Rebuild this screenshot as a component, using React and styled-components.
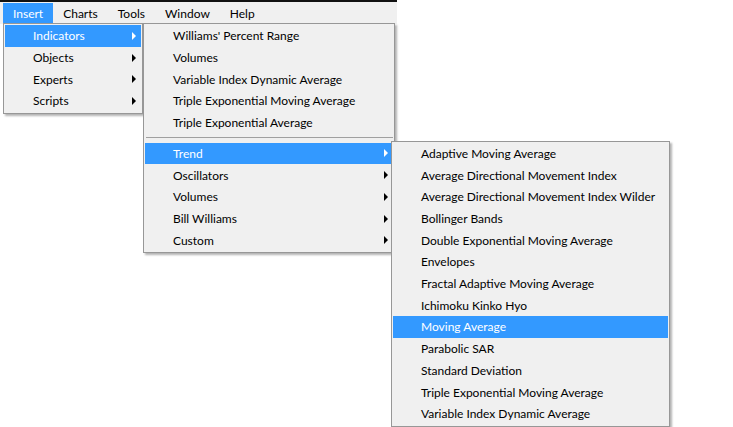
import React from 'react';
import styled, { createGlobalStyle } from 'styled-components';

const GlobalStyle = createGlobalStyle`
  html, body {
    margin: 0;
    padding: 0;
    background: #fff;
  }
  body {
    font-family: Lato, "Noto Sans", "Open Sans", sans-serif;
  }
`;

const Screen = styled.div`
  position: relative;
  width: 733px;
  height: 427px;
  overflow: hidden;
  background: #fff;
  font-size: 12px;
  color: #000;
`;

const MenuBar = styled.nav`
  display: flex;
  width: 397px;
  height: 24px;
  box-sizing: border-box;
  padding: 1px 0 0 3px;
  border-top: 2px solid #111;
  background: #f0f0f0;
`;

const BarItem = styled.div`
  position: relative;
  display: flex;
  align-items: center;
  height: 21px;
  padding: 0 10px;
  margin-right: ${(p) => p.$gap}px;
  background: ${(p) => (p.$active ? '#3399ff' : 'transparent')};
  color: ${(p) => (p.$active ? '#fff' : '#000')};
`;

const Menu = styled.div`
  position: absolute;
  top: ${(p) => p.$top}px;
  left: ${(p) => p.$left}px;
  z-index: ${(p) => p.$level};
  width: ${(p) => p.$width}px;
  padding: 1px;
  border: 1px solid #979797;
  background: #f0f0f0;
  box-shadow: 2px 2px 2px rgba(0, 0, 0, 0.3);
  color: #000;
`;

const Item = styled.div`
  position: relative;
  display: flex;
  align-items: center;
  height: 21.7px;
  padding-left: 28px;
  white-space: nowrap;
  background: ${(p) => (p.$active ? '#3399ff' : 'transparent')};
  color: ${(p) => (p.$active ? '#fff' : '#000')};
`;

const Arrow = styled.span`
  width: 0;
  height: 0;
  margin-left: auto;
  margin-right: 5px;
  border-top: 4px solid transparent;
  border-bottom: 4px solid transparent;
  border-left: 4px solid ${(p) => (p.$active ? '#fff' : '#000')};
`;

const Separator = styled.div`
  height: 9.2px;
  display: flex;
  align-items: center;
  padding-left: 1px;

  &::before {
    content: '';
    flex: 1;
    height: 1px;
    margin-top: -1px;
    background: #a0a0a0;
  }
`;

const barItems = [
  { label: 'Insert', gap: 0 },
  { label: 'Charts', gap: 0 },
  { label: 'Tools', gap: 0 },
  { label: 'Window', gap: 0 },
  { label: 'Help', gap: 0 },
];

const insertItems = ['Indicators', 'Objects', 'Experts', 'Scripts'];

const recentIndicators = [
  "Williams' Percent Range",
  'Volumes',
  'Variable Index Dynamic Average',
  'Triple Exponential Moving Average',
  'Triple Exponential Average',
];

const indicatorGroups = ['Trend', 'Oscillators', 'Volumes', 'Bill Williams', 'Custom'];

const trendIndicators = [
  'Adaptive Moving Average',
  'Average Directional Movement Index',
  'Average Directional Movement Index Wilder',
  'Bollinger Bands',
  'Double Exponential Moving Average',
  'Envelopes',
  'Fractal Adaptive Moving Average',
  'Ichimoku Kinko Hyo',
  'Moving Average',
  'Parabolic SAR',
  'Standard Deviation',
  'Triple Exponential Moving Average',
  'Variable Index Dynamic Average',
];

function TrendMenu() {
  return (
    <Menu $top={-2} $left={246} $width={275} $level={3}>
      {trendIndicators.map((name) => (
        <Item key={name} $active={name === 'Moving Average'}>
          {name}
        </Item>
      ))}
    </Menu>
  );
}

function IndicatorsMenu() {
  return (
    <Menu $top={-2} $left={138} $width={248} $level={2}>
      {recentIndicators.map((name) => (
        <Item key={name}>{name}</Item>
      ))}
      <Separator />
      {indicatorGroups.map((name) => (
        <Item key={name} $active={name === 'Trend'}>
          {name}
          <Arrow $active={name === 'Trend'} />
          {name === 'Trend' && <TrendMenu />}
        </Item>
      ))}
    </Menu>
  );
}

function InsertMenu() {
  return (
    <Menu $top={20} $left={0} $width={136} $level={1}>
      {insertItems.map((name) => (
        <Item key={name} $active={name === 'Indicators'}>
          {name}
          <Arrow $active={name === 'Indicators'} />
          {name === 'Indicators' && <IndicatorsMenu />}
        </Item>
      ))}
    </Menu>
  );
}

export default function App() {
  return (
    <>
      <GlobalStyle />
      <Screen>
        <MenuBar>
          {barItems.map((item) => (
            <BarItem key={item.label} $active={item.label === 'Insert'} $gap={item.gap}>
              {item.label}
              {item.label === 'Insert' && <InsertMenu />}
            </BarItem>
          ))}
        </MenuBar>
      </Screen>
    </>
  );
}
